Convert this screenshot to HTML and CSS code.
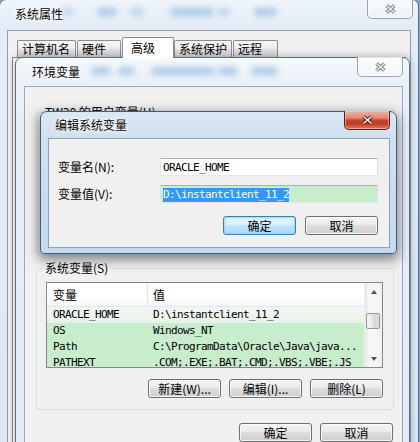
FILE: index.html
```html
<!DOCTYPE html>
<html>
<head>
<meta charset="utf-8">
<link rel="stylesheet" href="styles.css">
</head>
<body>
<div class="desk">
  <div class="win outer">
    <div class="titlebar">
      <span class="blob o1"></span><span class="blob o2"></span><span class="blob o3"></span><span class="blob o4"></span><span class="blob o5"></span><span class="blob o6"></span>
      <span class="ttext">系统属性</span>
    </div>
    <div class="closebtn idle outer-close">
      <svg width="11" height="10" viewBox="0 0 11 10"><path d="M1.5 1.5L9.5 8.5M9.5 1.5L1.5 8.5" stroke="#7a7f86" stroke-width="3.6" fill="none"/><path d="M1.5 1.5L9.5 8.5M9.5 1.5L1.5 8.5" stroke="#f2f2f2" stroke-width="1.4" fill="none"/></svg>
    </div>
    <div class="client">
      <div class="tabs">
        <div class="tab t1">计算机名</div>
        <div class="tab t2">硬件</div>
        <div class="tab sel">高级</div>
        <div class="tab t4">系统保护</div>
        <div class="tab t5">远程</div>
      </div>
      <div class="tabpanel"></div>
    </div>
  </div>

  <div class="win env">
    <div class="titlebar">
      <span class="blob e1"></span><span class="blob e2"></span><span class="blob e3"></span><span class="blob e4"></span><span class="blob e5"></span>
      <span class="ttext">环境变量</span>
    </div>
    <div class="closebtn idle env-close">
      <svg width="11" height="10" viewBox="0 0 11 10"><path d="M1.5 1.5L9.5 8.5M9.5 1.5L1.5 8.5" stroke="#7a7f86" stroke-width="3.6" fill="none"/><path d="M1.5 1.5L9.5 8.5M9.5 1.5L1.5 8.5" stroke="#f2f2f2" stroke-width="1.4" fill="none"/></svg>
    </div>
    <div class="client">
      <fieldset class="grp user"><legend>TW30 的用户变量(U)</legend></fieldset>
      <fieldset class="grp sys">
        <legend>系统变量(S)</legend>
        <div class="list">
          <div class="lv">
            <div class="hdr"><div class="c1">变量</div><div class="c2">值</div></div>
            <div class="row cur"><div class="c1 m">ORACLE_HOME</div><div class="c2 m">D:\instantclient_11_2</div></div>
            <div class="row"><div class="c1 m">OS</div><div class="c2 m">Windows_NT</div></div>
            <div class="row"><div class="c1 m">Path</div><div class="c2 m">C:\ProgramData\Oracle\Java\java...</div></div>
            <div class="row"><div class="c1 m">PATHEXT</div><div class="c2 m">.COM;.EXE;.BAT;.CMD;.VBS;.VBE;.JS</div></div>
          </div>
          <div class="sb">
            <div class="arr"><span class="up"></span></div>
            <div class="track"><div class="thumb"></div></div>
            <div class="arr"><span class="down"></span></div>
          </div>
        </div>
        <div class="btnrow">
          <div class="btn">新建(W)...</div>
          <div class="btn">编辑(I)...</div>
          <div class="btn">删除(L)</div>
        </div>
      </fieldset>
      <div class="btnrow bottom">
        <div class="btn">确定</div>
        <div class="btn">取消</div>
      </div>
    </div>
  </div>

  <div class="win edit">
    <div class="titlebar"><span class="ttext">编辑系统变量</span></div>
    <div class="closebtn red edit-close">
      <svg width="11" height="10" viewBox="0 0 11 10"><path d="M1.5 1.5L9.5 8.5M9.5 1.5L1.5 8.5" stroke="#5b1a10" stroke-width="3.6" fill="none"/><path d="M1.5 1.5L9.5 8.5M9.5 1.5L1.5 8.5" stroke="#ffffff" stroke-width="1.5" fill="none"/></svg>
    </div>
    <div class="client form">
      <div class="lbl">变量名(N):</div>
      <div class="inp m">ORACLE_HOME</div>
      <div class="lbl">变量值(V):</div>
      <div class="inp green m"><span class="selt">D:\instantclient_11_2</span></div>
      <div class="btnrow dlg">
        <div class="btn def">确定</div>
        <div class="btn">取消</div>
      </div>
    </div>
  </div>
</div>
</body>
</html>
```

FILE: styles.css
```css
html, body {
  margin: 0;
  padding: 0;
}
body {
  width: 420px;
  height: 442px;
  overflow: hidden;
  background: #7fa9cf;
  font-family: "Noto Sans CJK SC", sans-serif;
  font-size: 12px;
  color: #000;
}
.desk {
  position: relative;
  width: 420px;
  height: 442px;
  overflow: hidden;
}
.m {
  font-family: "DejaVu Sans Mono", "Liberation Mono", monospace;
  font-size: 11px;
  letter-spacing: -0.62px;
}

/* windows */
.win {
  position: absolute;
  box-sizing: border-box;
  display: flex;
  flex-direction: column;
  border: 1px solid #5f6f80;
  border-radius: 7px 7px 0 0;
  background: linear-gradient(180deg, #f4f8fc 0, #e4eef7 26px, #dde8f3 60px, #d8e5f1 100%);
  padding: 0 7px 7px 7px;
}
.titlebar {
  position: relative;
  flex: none;
  height: 29px;
}
.ttext {
  position: absolute;
  left: 8px;
  top: 6px;
  line-height: 16px;
  white-space: nowrap;
  text-shadow: 0 0 6px #fff, 0 0 3px #fff, 0 0 2px #fff;
}
.blob {
  position: absolute;
  top: 8px;
  height: 8px;
  border-radius: 5px;
  background: #4f8ccc;
  opacity: 0.4;
  filter: blur(3px);
}
.closebtn {
  position: absolute;
  box-sizing: border-box;
  width: 46px;
  height: 20px;
  top: -1px;
  display: flex;
  align-items: center;
  justify-content: center;
  border-radius: 0 0 5px 5px;
}
.closebtn.idle {
  border: 1px solid rgba(80, 92, 108, 0.55);
  border-top: none;
  background: linear-gradient(180deg, rgba(255,255,255,0.55), rgba(255,255,255,0.25));
  box-shadow: inset 0 0 0 1px rgba(255,255,255,0.6);
}
.closebtn.red {
  border: 1px solid #5e1d12;
  border-top: none;
  height: 19px;
  background: linear-gradient(180deg, #ecb6a8 0%, #e08a73 38%, #c8452b 52%, #c2391f 70%, #dc7c60 100%);
  box-shadow: inset 0 0 0 1px rgba(255,210,200,0.5);
}

.outer {
  left: -1px;
  top: -1px;
  width: 420px;
  height: 470px;
  background: linear-gradient(180deg, #eef5fb 0, #e3edf7 28px, #dce8f3 100%);
}
.outer .titlebar { height: 30px; }
.outer .ttext { top: 6px; }
.outer-close { left: 367px; }
.o1 { left: 53px; width: 14px; opacity: 0.25; }
.o2 { left: 90px; width: 20px; }
.o3 { left: 123px; width: 14px; opacity: 0.3; }
.o4 { left: 163px; width: 44px; }
.o5 { left: 211px; width: 12px; opacity: 0.3; }
.o6 { left: 247px; width: 23px; }

.outer .client {
  flex: 1;
  display: flex;
  flex-direction: column;
  border: 1px solid #8e9cab;
  background: #f0f0f0;
}
.tabs {
  display: flex;
  align-items: flex-end;
  height: 26px;
  padding-left: 9px;
  flex: none;
}
.tab {
  box-sizing: border-box;
  height: 17px;
  padding: 0 0 0 4px;
  line-height: 15px;
  border: 1px solid #898c95;
  border-bottom: none;
  background: linear-gradient(180deg, #f6f6f6 0%, #ececec 50%, #e0e0e0 51%, #d4d4d4 100%);
  white-space: nowrap;
  border-radius: 2px 2px 0 0;
}
.t1 { width: 59px; }
.t2 { width: 44px; margin-left: 1px; }
.tab.sel {
  position: relative;
  z-index: 1;
  width: 52px;
  height: 21px;
  margin-left: 1px;
  margin-bottom: -1px;
  padding: 2px 0 0 8px;
  line-height: 16px;
  background: #fff;
}
.t4 { width: 58px; }
.t5 { width: 45px; margin-left: 1px; }
.tabpanel {
  flex: 1;
  margin: 0 4px 4px 4px;
  border: 1px solid #898c95;
  background: #fff;
}

/* environment window */
.env {
  left: 15px;
  top: 57px;
  width: 395px;
  height: 430px;
  padding: 0 6px 0 8px;
  box-shadow: 0 0 8px rgba(0, 0, 0, 0.3);
  background: linear-gradient(180deg, #f6f9fc 0, #e8f0f8 26px, #e1ebf5 100%);
}
.env .titlebar { height: 28px; }
.env-close { left: 341px; }
.e1 { left: 67px; width: 20px; top: 9px; }
.e2 { left: 94px; width: 17px; top: 9px; }
.e3 { left: 127px; width: 64px; top: 9px; }
.e4 { left: 194px; width: 20px; top: 9px; }
.e5 { left: 227px; width: 27px; top: 9px; }

.env .client {
  flex: 1;
  border: 1px solid #9aa7b4;
  background: #f0f0f0;
  padding: 0 8px 0 11px;
}
.grp {
  box-sizing: border-box;
  margin: 0;
  min-width: 0;
  height: 150px;
  padding: 6px 10px 0 9px;
  border: 1px solid #d5dfe5;
  border-radius: 3px;
}
.grp legend {
  padding: 0 1px;
  margin-left: -2px;
  line-height: 16px;
  white-space: nowrap;
}
.grp.user { margin-top: 17px; }
.grp.sys { margin-top: 6px; }

.list {
  box-sizing: border-box;
  height: 86px;
  border: 1px solid #828790;
  background: #c7edcc;
  display: flex;
  overflow: hidden;
}
.lv {
  flex: 1;
  overflow: hidden;
}
.hdr {
  box-sizing: border-box;
  height: 24px;
  display: flex;
  background: linear-gradient(180deg, #ffffff 0%, #ffffff 60%, #f6f7f8 100%);
  border-bottom: 1px solid #e3e6ea;
  line-height: 23px;
}
.hdr .c1 { border-right: 1px solid #e3e6ea; }
.c1 {
  box-sizing: border-box;
  width: 101px;
  padding-left: 6px;
  flex: none;
  white-space: nowrap;
  overflow: hidden;
}
.c2 {
  flex: 1;
  padding-left: 5px;
  white-space: nowrap;
  overflow: hidden;
}
.row {
  display: flex;
  height: 16px;
  line-height: 16px;
}
.row.cur {
  background: linear-gradient(180deg, #f2f8f3, #e6f3e8);
}
.sb {
  flex: none;
  width: 17px;
  display: flex;
  flex-direction: column;
  background: linear-gradient(90deg, #e4e4e4 0, #f4f4f4 3px, #f7f7f7 50%, #f0f0f0 100%);
  border-left: 1px solid #f0f0f0;
}
.arr {
  flex: none;
  height: 17px;
  display: flex;
  align-items: center;
  justify-content: center;
}
.up, .down {
  width: 0;
  height: 0;
  border-left: 3.5px solid transparent;
  border-right: 3.5px solid transparent;
}
.up { border-bottom: 4px solid #4d4d4d; }
.down { border-top: 4px solid #4d4d4d; }
.track { flex: 1; }
.thumb {
  box-sizing: border-box;
  height: 16px;
  margin: 13px 2px 0 1px;
  border: 1px solid #979797;
  border-radius: 2px;
  background: linear-gradient(90deg, #f3f3f3, #e6e6e6 50%, #d8d8d8 51%, #dcdcdc);
}

.btnrow {
  display: flex;
  justify-content: flex-end;
  gap: 8px;
  margin-top: 11px;
}
.btnrow.bottom {
  margin-top: 13px;
  padding-right: 1px;
}
.btn {
  box-sizing: border-box;
  width: 73px;
  height: 19px;
  line-height: 17px;
  text-align: center;
  white-space: nowrap;
  border: 1px solid #707070;
  border-radius: 3px;
  background: linear-gradient(180deg, #f4f4f4 0%, #ebebeb 45%, #dddddd 50%, #cfcfcf 100%);
  box-shadow: inset 0 0 0 1px rgba(255, 255, 255, 0.75);
}
.btn.def {
  border-color: #3c7fb1;
  background: linear-gradient(180deg, #eaf6fd 0%, #d9f0fc 45%, #bee6fd 50%, #a7d9f5 100%);
  box-shadow: inset 0 0 2px 1px #8fd7f5;
}

/* edit dialog */
.edit {
  left: 40px;
  top: 111px;
  width: 357px;
  height: 143px;
  padding: 0 6px 5px 7px;
  border-color: #3e5c7b;
  border-radius: 7px 7px 4px 4px;
  background: linear-gradient(180deg, #dbe8f4 0, #cfe0f0 26px, #c4d9ed 100%);
  box-shadow: 0 4px 12px 2px rgba(0, 0, 0, 0.45);
}
.edit .titlebar { height: 26px; }
.edit .ttext { left: 7px; top: 5px; }
.edit-close { left: 303px; }
.form {
  flex: 1;
  display: grid;
  grid-template-columns: 102px 218px;
  grid-auto-rows: 18px;
  row-gap: 9px;
  align-content: start;
  padding: 19px 0 0 9px;
  border: 1px solid #8aa3bd;
  background: #f0f0f0;
}
.lbl {
  line-height: 18px;
  white-space: nowrap;
}
.inp {
  box-sizing: border-box;
  height: 18px;
  padding: 1px 0 0 2px;
  line-height: 15px;
  border: 1px solid;
  border-color: #abadb3 #dbdfe6 #e3e9ef #e2e3ea;
  background: #fff;
  white-space: nowrap;
  overflow: hidden;
}
.inp.green { background: #c7edcc; }
.selt {
  display: inline-block;
  line-height: 14px;
  background: #3399ff;
  color: #fff;
}
.btnrow.dlg {
  grid-column: 1 / -1;
  gap: 9px;
  margin-top: 4px;
  height: 19px;
}
```
